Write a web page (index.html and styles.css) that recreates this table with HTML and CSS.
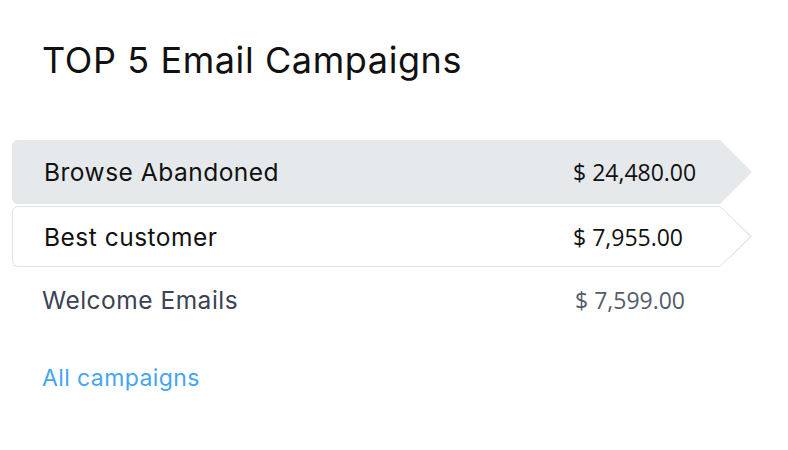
FILE: index.html
```html
<!DOCTYPE html>
<html>
<head>
<meta charset="utf-8">
<link rel="stylesheet" href="styles.css">
</head>
<body>
<div class="widget">
  <h1 class="title">TOP 5 Email Campaigns</h1>
  <div class="list">
    <div class="row row-active">
      <span class="name">Browse Abandoned</span>
      <span class="value">$ 24,480.00</span>
    </div>
    <div class="row-outline">
      <div class="row row-inner">
        <span class="name">Best customer</span>
        <span class="value">$ 7,955.00</span>
      </div>
    </div>
    <div class="row row-plain">
      <span class="name">Welcome Emails</span>
      <span class="value">$ 7,599.00</span>
    </div>
  </div>
  <a class="all-link" href="#">All campaigns</a>
</div>
</body>
</html>
```
FILE: styles.css
```css
html, body {
  margin: 0;
  padding: 0;
  background: #ffffff;
}
body {
  font-family: Inter, "Open Sans", sans-serif;
  color: #111111;
}
.widget {
  padding: 38px 0 0 12px;
  width: 740px;
}
.title {
  margin: 0 0 0 30px;
  font-size: 36px;
  line-height: 44px;
  letter-spacing: 0.6px;
  font-weight: 400;
  color: #111111;
}
.list {
  margin-top: 58px;
  display: flex;
  flex-direction: column;
  gap: 2px;
}
.row {
  display: flex;
  align-items: center;
  height: 64px;
  padding-left: 32px;
  font-size: 24.5px;
  box-sizing: border-box;
}
.name {
  width: 529px;
  letter-spacing: 0.5px;
}
.value {
  font-family: "Open Sans", sans-serif;
  font-size: 23px;
}
.row-active {
  background: #e5e9eb;
  border-radius: 6px;
  clip-path: polygon(0 0, calc(100% - 32px) 0, 100% 50%, calc(100% - 32px) 100%, 0 100%);
}
.row-outline {
  background: #dfe4e7;
  height: 61px;
  padding: 1px;
  box-sizing: border-box;
  border-radius: 6px;
  clip-path: polygon(0 0, calc(100% - 32px) 0, 100% 50%, calc(100% - 32px) 100%, 0 100%);
}
.row-inner {
  background: #ffffff;
  height: 59px;
  padding-left: 31px;
  border-radius: 5px;
  clip-path: polygon(0 0, calc(100% - 31px) 0, calc(100% - 1px) 50%, calc(100% - 31px) 100%, 0 100%);
}
.row-plain {
  height: 61px;
  padding-left: 30px;
  color: #3d4354;
}
.row-plain .name {
  width: 533px;
}
.row-plain .value {
  color: #555c6a;
}
.all-link {
  display: inline-block;
  margin: 34px 0 0 30px;
  font-size: 23px;
  letter-spacing: 0.4px;
  color: #45a5f5;
  text-decoration: none;
}
```
